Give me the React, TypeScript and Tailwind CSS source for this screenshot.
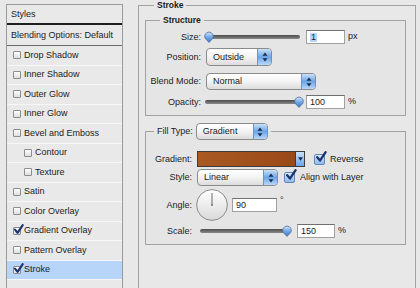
import React from "react";

type Effect = { name: string; sub?: boolean; on?: boolean; active?: boolean };

const effects: Effect[] = [
  { name: "Drop Shadow" },
  { name: "Inner Shadow" },
  { name: "Outer Glow" },
  { name: "Inner Glow" },
  { name: "Bevel and Emboss" },
  { name: "Contour", sub: true },
  { name: "Texture", sub: true },
  { name: "Satin" },
  { name: "Color Overlay" },
  { name: "Gradient Overlay", on: true },
  { name: "Pattern Overlay" },
  { name: "Stroke", on: true, active: true },
];

function Check({ className }: { className?: string }) {
  return (
    <svg viewBox="0 0 12 12" className={className}>
      <path
        d="M2.2 6.2 L5 9.6 L10.6 1.2"
        fill="none"
        stroke="#1b3370"
        strokeWidth={2.3}
        strokeLinecap="round"
        strokeLinejoin="round"
      />
    </svg>
  );
}

function ListBox({ on }: { on?: boolean }) {
  return (
    <span className="relative block w-[8px] h-[8px] shrink-0 rounded-[1px] border border-[#8c8c8c] bg-linear-to-b from-white to-[#dedede]">
      {on && <Check className="absolute -top-[4px] -left-[1px] w-[11px] h-[11px]" />}
    </span>
  );
}

function AquaBox({ className }: { className: string }) {
  return (
    <span
      className={`relative block w-[11px] h-[11px] shrink-0 rounded-[2px] border border-[#5f86b8] bg-linear-to-b from-[#d9e9fb] to-[#8fbbed] ${className}`}
    >
      <Check className="absolute -top-[4px] left-[0px] w-[12px] h-[12px]" />
    </span>
  );
}

function Arrows() {
  return (
    <svg viewBox="0 0 6 10" className="w-[6px] h-[10px]">
      <path d="M3 0.5 L5.5 3.8 L0.5 3.8 Z" fill="#1b2b4d" />
      <path d="M3 9.5 L5.5 6.2 L0.5 6.2 Z" fill="#1b2b4d" />
    </svg>
  );
}

function Select({ label, className }: { label: string; className: string }) {
  return (
    <div
      className={`flex shrink-0 overflow-hidden rounded-[4px] border border-[#8b8b8b] bg-linear-to-b from-white via-[#f3f3f3] to-[#dcdcdc] ${className}`}
    >
      <span className="flex-1 flex items-center pl-[6px]">{label}</span>
      <span className="w-[14px] flex items-center justify-center border-l border-[#6f92c0] bg-linear-to-b from-[#c9e0fa] via-[#6aa5e6] to-[#b9d8f8]">
        <Arrows />
      </span>
    </div>
  );
}

function Field({ value, className, selected }: { value: string; className: string; selected?: boolean }) {
  return (
    <div
      className={`flex items-center shrink-0 h-[14px] pl-[3px] bg-white border border-[#a0a0a0] border-t-[#707070] ${className}`}
    >
      <span className={selected ? "bg-[#b5d5fd] px-[1px]" : ""}>{value}</span>
    </div>
  );
}

function Knob({ className }: { className: string }) {
  return (
    <svg viewBox="0 0 10 12" className={`w-[10px] h-[12px] ${className}`}>
      <defs>
        <linearGradient id="kb" x1="0" y1="0" x2="0" y2="1">
          <stop offset="0" stopColor="#d6e7fb" />
          <stop offset="0.5" stopColor="#6fa6e6" />
          <stop offset="1" stopColor="#3b78c8" />
        </linearGradient>
      </defs>
      <path d="M5 11.4 L1.2 7.4 A4.3 4.3 0 1 1 8.8 7.4 Z" fill="url(#kb)" stroke="#4c6d9c" strokeWidth={0.8} />
    </svg>
  );
}

function Slider({ className, end }: { className: string; end?: boolean }) {
  return (
    <div className={`relative h-[12px] flex items-center shrink-0 ${className}`}>
      <div className="w-full h-[4px] rounded-full bg-linear-to-b from-[#4d4d4d] to-[#8a8a8a]" />
      <Knob className={end ? "absolute -right-[4px] top-0" : "absolute -left-[1px] top-0"} />
    </div>
  );
}

function Dial() {
  return (
    <svg viewBox="0 0 32 32" className="ml-[4px] w-[32px] h-[32px] shrink-0">
      <defs>
        <linearGradient id="dl" x1="0" y1="0" x2="0" y2="1">
          <stop offset="0" stopColor="#ffffff" />
          <stop offset="1" stopColor="#d9d9d9" />
        </linearGradient>
      </defs>
      <circle cx="16" cy="16" r="15.4" fill="url(#dl)" stroke="#8a8a8a" strokeWidth={1} />
      <line x1="16" y1="16" x2="16" y2="4" stroke="#6a6a6a" strokeWidth={1} />
      <circle cx="16" cy="16" r="1" fill="#777" />
    </svg>
  );
}

export default function App() {
  return (
    <div className="w-[420px] h-[288px] overflow-hidden flex items-start bg-[#e8e8e8] font-['Liberation_Sans',Arial,sans-serif] text-[9px] leading-none text-[#1b1b1b]">
      {/* layer style list */}
      <aside className="ml-[6px] mt-[4px] w-[117px] h-[300px] shrink-0 flex flex-col border border-[#9a9a9a] bg-[#e9e9e9]">
        <div className="h-[20px] flex items-center pl-[4px] border-b-2 border-[#1f1f1f]">Styles</div>
        <div className="h-[21px] flex items-center pl-[4px] border-b border-[#6a6a6a]">Blending Options: Default</div>
        {effects.map((e) => (
          <div
            key={e.name}
            className={`h-[19.5px] flex items-center gap-[3px] border-b border-[#f7f7f7] ${
              e.sub ? "pl-[17px]" : "pl-[6px]"
            } ${e.active ? "bg-[#b6d5f8]" : ""}`}
          >
            <ListBox on={e.on} />
            <span>{e.name}</span>
          </div>
        ))}
      </aside>

      {/* stroke settings */}
      <fieldset className="ml-[15px] w-[278px] h-[320px] shrink-0 border border-[#a2a2a2] pl-[6px] pr-[9px]">
        <legend className="ml-[9px] px-[3px] h-[11px] leading-[11px] text-[8.5px] font-bold">Stroke</legend>

        <fieldset className="mt-[3px] border border-[#a2a2a2] bg-[#e5e5e5] pb-[6px]">
          <legend className="ml-[14px] px-[3px] h-[12px] leading-[12px] text-[8.5px] font-bold">Structure</legend>

          <div className="mt-[3px] h-[16px] flex items-center">
            <span className="w-[55px] text-right">Size:</span>
            <Slider className="ml-[4px] w-[95px]" />
            <Field value="1" selected className="ml-[6px] w-[39px]" />
            <span className="ml-[3px] -translate-y-[1px]">px</span>
          </div>

          <div className="mt-[3px] h-[18px] flex items-center">
            <span className="w-[55px] text-right">Position:</span>
            <Select label="Outside" className="ml-[5px] w-[66px] h-[18px]" />
          </div>

          <div className="mt-[7px] h-[17px] flex items-center">
            <span className="w-[55px] text-right">Blend Mode:</span>
            <Select label="Normal" className="ml-[5px] w-[110px] h-[17px]" />
          </div>

          <div className="mt-[5px] h-[14px] flex items-center">
            <span className="w-[55px] text-right">Opacity:</span>
            <Slider end className="ml-[4px] w-[95px]" />
            <Field value="100" className="ml-[6px] w-[39px]" />
            <span className="ml-[3px] -translate-y-[1px]">%</span>
          </div>
        </fieldset>

        <fieldset className="mt-[7px] border border-[#a2a2a2] bg-[#e5e5e5] pb-[6px]">
          <legend className="ml-[8px] px-[3px] h-[17px] flex items-center">
            <span>Fill Type:</span>
            <Select label="Gradient" className="ml-[3px] w-[72px] h-[17px]" />
          </legend>

          <div className="mt-[11px] h-[16px] flex items-center">
            <span className="w-[46px] text-right">Gradient:</span>
            <div className="ml-[5px] h-[16px] flex border border-[#3c3c3c] shrink-0">
              <div className="w-[97px] bg-linear-to-r from-[#a85a22] to-[#9a4818]" />
              <div className="w-[9px] flex items-center justify-center border-l border-[#3c3c3c] bg-linear-to-b from-[#c9e0fa] to-[#6aa5e6]">
                <svg viewBox="0 0 6 4" className="w-[5px] h-[4px]">
                  <path d="M0 0 L6 0 L3 4 Z" fill="#1b2b4d" />
                </svg>
              </div>
            </div>
            <AquaBox className="ml-[9px]" />
            <span className="ml-[5px]">Reverse</span>
          </div>

          <div className="mt-[2px] h-[17px] flex items-center">
            <span className="w-[46px] text-right">Style:</span>
            <Select label="Linear" className="ml-[5px] w-[81px] h-[17px]" />
            <AquaBox className="ml-[6px]" />
            <span className="ml-[5px]">Align with Layer</span>
          </div>

          <div className="mt-[3px] h-[32px] flex items-center">
            <span className="w-[46px] text-right">Angle:</span>
            <Dial />
            <Field value="90" className="ml-[4px] w-[45px]" />
            <span className="ml-[3px] -translate-y-[5px]">°</span>
          </div>

          <div className="mt-[3px] h-[14px] flex items-center">
            <span className="w-[46px] text-right">Scale:</span>
            <Slider end className="ml-[8px] w-[88px]" />
            <Field value="150" className="ml-[9px] w-[38px]" />
            <span className="ml-[3px] -translate-y-[1px]">%</span>
          </div>
        </fieldset>
      </fieldset>
    </div>
  );
}
